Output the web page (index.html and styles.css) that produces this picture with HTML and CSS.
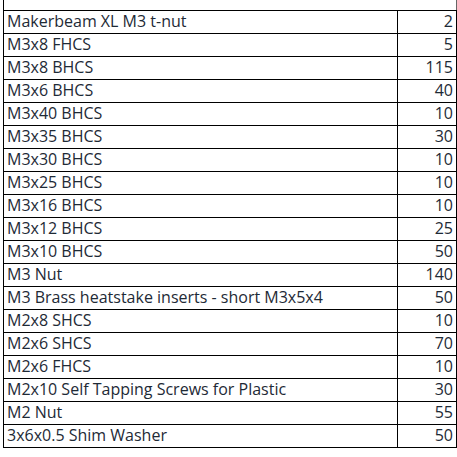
FILE: index.html
```html
<!DOCTYPE html>
<html>
<head>
<meta charset="utf-8">
<link rel="stylesheet" href="styles.css">
</head>
<body>
<table class="parts">
  <tr class="lead"><td class="name"></td><td class="qty"></td></tr>
  <tr><td class="name">Makerbeam XL M3 t-nut</td><td class="qty">2</td></tr>
  <tr><td class="name">M3x8 FHCS</td><td class="qty">5</td></tr>
  <tr><td class="name">M3x8 BHCS</td><td class="qty">115</td></tr>
  <tr><td class="name">M3x6 BHCS</td><td class="qty">40</td></tr>
  <tr><td class="name">M3x40 BHCS</td><td class="qty">10</td></tr>
  <tr><td class="name">M3x35 BHCS</td><td class="qty">30</td></tr>
  <tr><td class="name">M3x30 BHCS</td><td class="qty">10</td></tr>
  <tr><td class="name">M3x25 BHCS</td><td class="qty">10</td></tr>
  <tr><td class="name">M3x16 BHCS</td><td class="qty">10</td></tr>
  <tr><td class="name">M3x12 BHCS</td><td class="qty">25</td></tr>
  <tr><td class="name">M3x10 BHCS</td><td class="qty">50</td></tr>
  <tr><td class="name">M3 Nut</td><td class="qty">140</td></tr>
  <tr><td class="name">M3 Brass heatstake inserts - short M3x5x4</td><td class="qty">50</td></tr>
  <tr><td class="name">M2x8 SHCS</td><td class="qty">10</td></tr>
  <tr><td class="name">M2x6 SHCS</td><td class="qty">70</td></tr>
  <tr><td class="name">M2x6 FHCS</td><td class="qty">10</td></tr>
  <tr><td class="name">M2x10 Self Tapping Screws for Plastic</td><td class="qty">30</td></tr>
  <tr><td class="name">M2 Nut</td><td class="qty">55</td></tr>
  <tr><td class="name">3x6x0.5 Shim Washer</td><td class="qty">50</td></tr>
</table>
</body>
</html>
```

FILE: styles.css
```css
html, body {
  margin: 0;
  padding: 0;
  background: #ffffff;
}

body {
  font-family: "Open Sans", "Noto Sans", sans-serif;
  font-size: 16px;
  color: #1e2a36;
}

.parts {
  border-collapse: collapse;
  margin-left: 3px;
  table-layout: fixed;
  width: 453px;
}

.parts td {
  border: 1px solid #000;
  height: 23px;
  padding: 0 3px;
  box-sizing: border-box;
  line-height: 21px;
  white-space: nowrap;
  overflow: hidden;
}

.parts .name {
  width: 394px;
  text-align: left;
}

.parts .qty {
  width: 59px;
  text-align: right;
}

.parts .lead td {
  height: 10px;
  border-top: none;
  border-bottom: 1px solid #000;
  border-left: 1px solid #000;
  border-right: 1px solid #000;
}

.parts .lead .name {
  border-right: none;
}

.parts .lead .qty {
  border-left: none;
  border-right-color: #666;
}
```
